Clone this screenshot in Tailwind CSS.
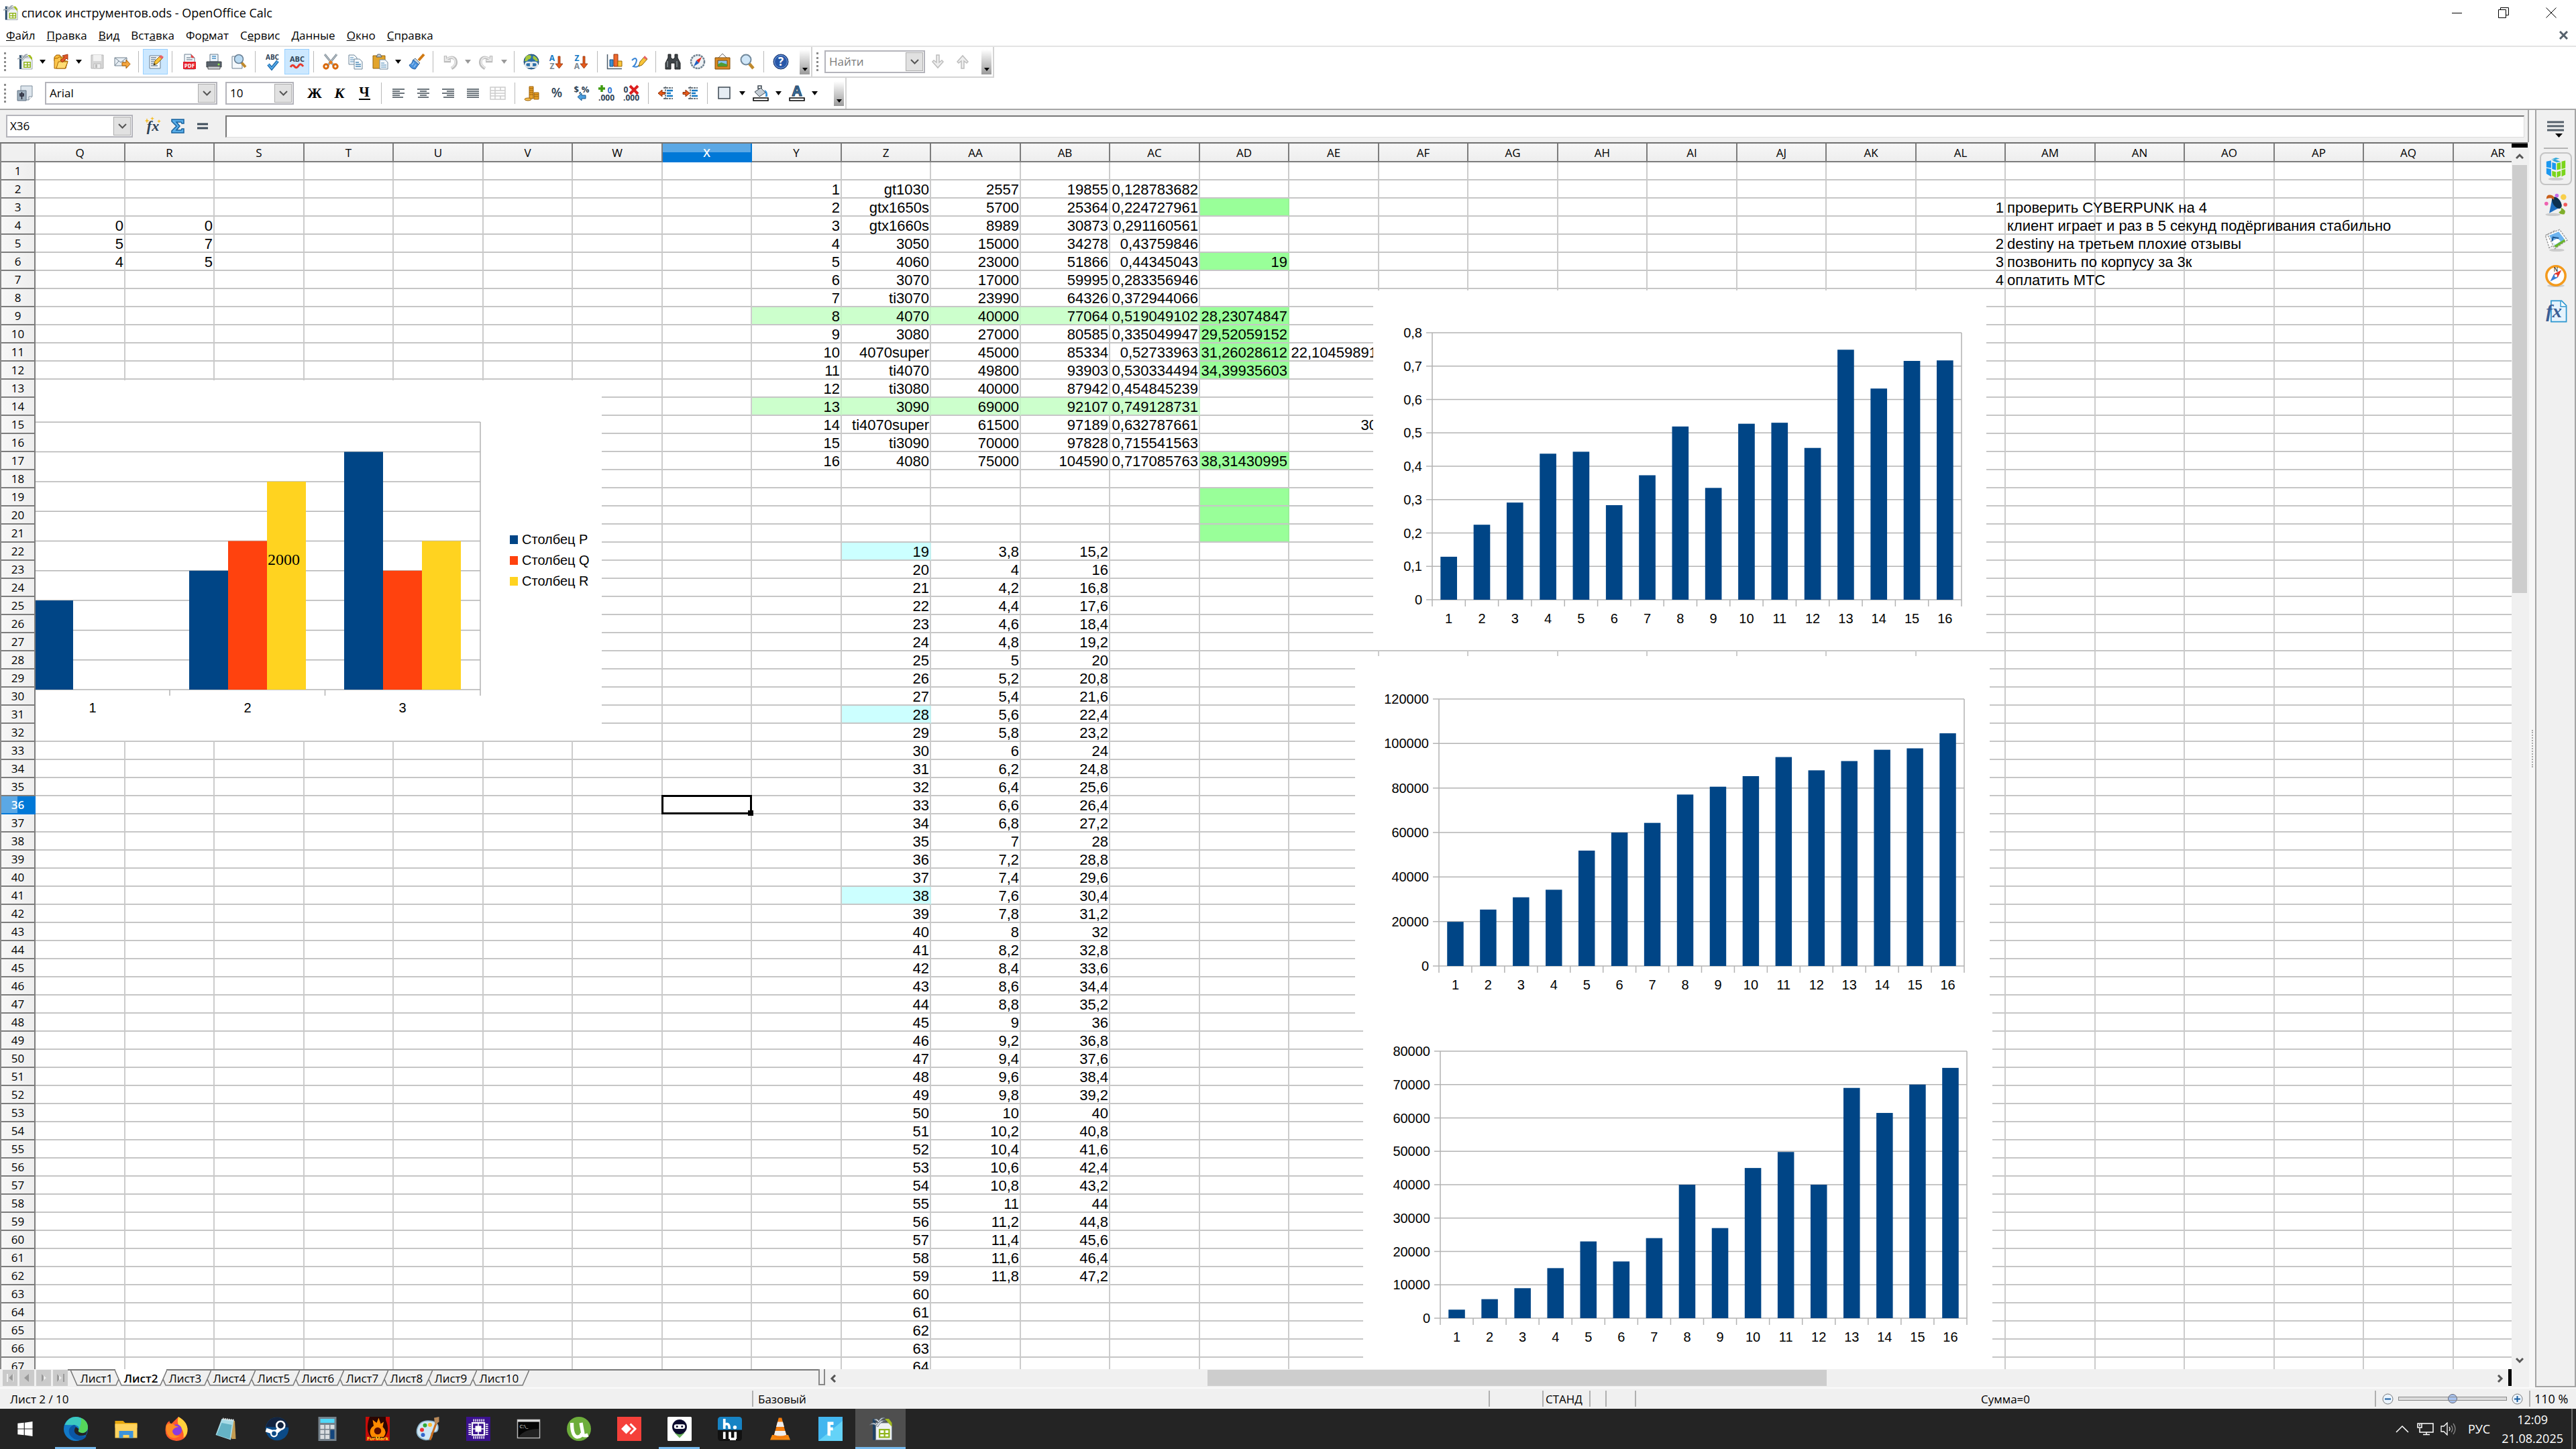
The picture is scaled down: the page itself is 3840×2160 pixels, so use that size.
<!DOCTYPE html>
<html lang="ru">
<head>
    <meta charset="UTF-8">
    <meta name="viewport" content="width=device-width, initial-scale=1.0">
    <title>список инструментов.ods - OpenOffice Calc</title>
    <script src="https://cdn.jsdelivr.net/npm/@tailwindcss/browser@4"></script>
</head>
<body class="h-screen overflow-hidden bg-white text-black flex flex-col text-[17px] leading-6 font-['Open_Sans',sans-serif]">
    <header>
        <div class="h-[37px] flex items-center justify-between">
            <div class="flex items-center gap-[5px] pl-1">
                <span data-icon="calc" class="w-[23px] h-6"></span>
                <h1 class="text-[18px]">список инструментов.ods - OpenOffice Calc</h1>
            </div>
            <div class="flex">
                <button aria-label="Свернуть" class="w-[69px] h-8 flex items-center justify-center"><svg width="16" height="16" fill="none" stroke="#000"><path d="M0 8.500h15"/></svg></button>
                <button aria-label="Развернуть" class="w-[69px] h-8 flex items-center justify-center"><svg width="16" height="16" fill="none" stroke="#000"><path d="M.5 3.500h11v12h-11zM3.500 3.500v-3h12v11h-4"/></svg></button>
                <button aria-label="Закрыть" class="w-[74px] h-8 flex items-center justify-center"><svg width="16" height="16" fill="none" stroke="#000"><path d="M.5.5l15 15M15.500.5l-15 15"/></svg></button>
            </div>
        </div>
        <nav class="h-[33px] flex items-center justify-between border-b-2 border-[#e3e3e3] pl-[9px] pr-3">
            <div class="flex gap-[17px]">
                <a href="#"><u>Ф</u>айл</a>
                <a href="#"><u>П</u>равка</a>
                <a href="#"><u>В</u>ид</a>
                <a href="#">Вст<u>а</u>вка</a>
                <a href="#">Фо<u>р</u>мат</a>
                <a href="#">С<u>е</u>рвис</a>
                <a href="#"><u>Д</u>анные</a>
                <a href="#"><u>О</u>кно</a>
                <a href="#"><u>С</u>правка</a>
            </div>
            <button aria-label="Закрыть документ"><svg width="13" height="13" stroke="#55606b" stroke-width="3"><path d="M1 1l11 11M12 1L1 12"/></svg></button>
        </nav>
        <div class="flex h-[46px]">
            <div class="flex items-center border-b-2 border-r-2 border-[#d4d4d4] pr-0.5">
                <div class="w-[18px] flex justify-start pl-[6px]"><span class="h-7 border-l-3 border-dotted border-[#8c8c8c]"></span></div>
                <div id="standardBar" class="flex items-center"></div>
                <button aria-label="Ещё" class="ml-[10px] w-[15px] h-[37px] bg-linear-to-b from-white to-[#9b9b9b] flex items-end justify-center pb-[5px]"><svg width="8" height="5"><path d="M0 0h8L4 5z"/></svg></button>
            </div>
            <div class="flex items-center border-b-2 border-r-2 border-[#d4d4d4] pr-0.5">
                <div class="w-[18px] flex justify-start pl-[6px]"><span class="h-7 border-l-3 border-dotted border-[#8c8c8c]"></span></div>
                <div class="flex w-[150px] h-[34px] border-2 border-[#b4b4bb] bg-white">
                    <input aria-label="Найти" placeholder="Найти" class="w-0 flex-1 pl-[5px] placeholder:text-[#7c7c7c]">
                    <button aria-label="Список поиска" class="w-[26px] m-px border border-[#adadad] bg-[#e1e1e1] flex items-center justify-center"><svg width="13" height="8" fill="none" stroke="#555" stroke-width="2"><path d="M1 1l5.500 5.500L12 1"/></svg></button>
                </div>
                <button aria-label="Найти далее" class="w-[37px] flex justify-center"><svg width="20" height="22" fill="#eee" stroke="#bdbdbd" stroke-width="1.500"><path d="M8 1h4v11l4-3 2 2-8 9-8-9 2-2 4 3z"/></svg></button>
                <button aria-label="Найти ранее" class="w-[37px] flex justify-center"><svg width="20" height="22" fill="#eee" stroke="#bdbdbd" stroke-width="1.500"><path d="M8 21h4V10l4 3 2-2-8-9-8 9 2 2 4-3z"/></svg></button>
                <button aria-label="Ещё" class="ml-[10px] w-[15px] h-[37px] bg-linear-to-b from-white to-[#9b9b9b] flex items-end justify-center pb-[5px]"><svg width="8" height="5"><path d="M0 0h8L4 5z"/></svg></button>
            </div>
        </div>
        <div class="flex h-[46px]">
            <div class="flex items-center border-r-2 border-[#d4d4d4] pr-0.5">
                <div class="w-[18px] flex justify-start pl-[6px]"><span class="h-7 border-l-3 border-dotted border-[#8c8c8c]"></span></div>
                <button aria-label="Стили" class="w-[37px] flex justify-center"><span data-icon="styles" class="w-6 h-6"></span></button>
                <div class="relative ml-3 w-[257px] h-[34px] border-2 border-[#b4b4bb] flex">
                    <select aria-label="Шрифт" class="appearance-none w-full pl-[5px]"><option>Arial</option></select>
                    <span class="pointer-events-none absolute right-px inset-y-px w-[26px] border border-[#adadad] bg-[#e1e1e1] flex items-center justify-center"><svg width="13" height="8" fill="none" stroke="#555" stroke-width="2"><path d="M1 1l5.500 5.500L12 1"/></svg></span>
                </div>
                <div class="relative mx-3 w-[102px] h-[34px] border-2 border-[#b4b4bb] flex">
                    <select aria-label="Размер" class="appearance-none w-full pl-[5px]"><option>10</option></select>
                    <span class="pointer-events-none absolute right-px inset-y-px w-[26px] border border-[#adadad] bg-[#e1e1e1] flex items-center justify-center"><svg width="13" height="8" fill="none" stroke="#555" stroke-width="2"><path d="M1 1l5.500 5.500L12 1"/></svg></span>
                </div>
                <div id="formatBar" class="flex items-center"></div>
                <button aria-label="Ещё" class="ml-5 w-[15px] h-[37px] bg-linear-to-b from-white to-[#9b9b9b] flex items-end justify-center pb-[5px]"><svg width="8" height="5"><path d="M0 0h8L4 5z"/></svg></button>
            </div>
        </div>
    </header>

    <main class="flex-1 min-h-0 flex bg-[#f0f0f0]">
        <div class="flex-1 min-w-0 flex flex-col border-t-2 border-[#a5a5a5]">
            <div class="h-12 flex items-center pl-[9px] pr-[5px] border-r-2 border-[#a5a5a5]">
                <div class="flex w-[189px] h-[34px] border-2 border-[#b4b4bb] bg-white">
                    <input aria-label="Имя ячейки" value="X36" class="w-0 flex-1 pl-1">
                    <button aria-label="Список имён" class="w-[26px] m-px border border-[#adadad] bg-[#e1e1e1] flex items-center justify-center"><svg width="13" height="8" fill="none" stroke="#555" stroke-width="2"><path d="M1 1l5.500 5.500L12 1"/></svg></button>
                </div>
                <div id="formulaBar" class="flex items-center ml-[11px] mr-4"></div>
                <input aria-label="Строка ввода" class="flex-1 h-[33px] bg-white border-t-2 border-l-2 border-r border-b border-t-[#777] border-l-[#777] border-r-[#ddd] border-b-[#ddd]">
            </div>
            <div class="flex-1 min-h-0 flex border-t-2 border-[#707070] mr-[2px]">
                <div class="relative flex-1 min-w-0 overflow-hidden bg-white border-l-2 border-[#8a8a8a]">
                    <table class="table-fixed w-[3789px] border-separate border-spacing-0 font-['Liberation_Sans',Arial,sans-serif] text-[22px] leading-[23px]">
                        <thead id="sheetHead" class="font-['Open_Sans',sans-serif] text-[17px]"></thead>
                        <tbody id="sheetBody"></tbody>
                    </table>
                    <div id="charts" class="font-['Liberation_Sans',Arial,sans-serif] text-[20px]"></div>
                </div>
                <div class="w-6 flex flex-col items-center">
                    <div class="h-[6px] w-full bg-black"></div>
                    <button aria-label="Вверх" class="h-[26px]"><svg width="12" height="10" fill="none" stroke="#555" stroke-width="3"><path d="M1 8l5-5 5 5"/></svg></button>
                    <div class="w-[22px] h-[638px] bg-[#cdcdcd]"></div>
                    <div class="flex-1"></div>
                    <button aria-label="Вниз" class="h-[26px]"><svg width="12" height="10" fill="none" stroke="#555" stroke-width="3"><path d="M1 2l5 5 5-5"/></svg></button>
                </div>
            </div>
            <div class="h-[27px] flex mr-[2px]">
                <div class="w-[1220px] flex">
                    <div class="flex gap-[3px] pl-1 pt-px">
                        <button aria-label="Первый лист" class="w-[22px] h-6 bg-[#cacaca] flex items-center justify-center"><svg width="12" height="14"><path d="M1 1h2v12H1zM11 1v12L4 7z" fill="#eee"/><path d="M10 1v11L4 7z" fill="#999"/></svg></button>
                        <button aria-label="Предыдущий лист" class="w-[22px] h-6 bg-[#cacaca] flex items-center justify-center"><svg width="12" height="14"><path d="M9 1v12L2 7z" fill="#999"/></svg></button>
                        <button aria-label="Следующий лист" class="w-[22px] h-6 bg-[#cacaca] flex items-center justify-center"><svg width="12" height="14"><path d="M3 1v12l7-6z" fill="#eee"/><path d="M3 1v12l3-3V4z" fill="#999"/></svg></button>
                        <button aria-label="Последний лист" class="w-[22px] h-6 bg-[#cacaca] flex items-center justify-center"><svg width="12" height="14"><path d="M1 1v12l7-6z" fill="#eee"/><path d="M1 1v12l3-3V4zM10 1h2v12h-2z" fill="#999"/></svg></button>
                    </div>
                    <div id="sheetTabs" class="flex flex-1 border-t-2 border-[#777] pl-[10px] mb-[2px]"></div>
                </div>
                <div class="w-[10px] mb-[3px] border-2 border-t-0 border-[#888] bg-[#f0f0f0]"></div>
                <button aria-label="Влево" class="w-6 flex items-center justify-center"><svg width="10" height="12" fill="none" stroke="#555" stroke-width="3"><path d="M8 1L3 6l5 5"/></svg></button>
                <div class="flex-1 flex pt-px pb-[2px]">
                    <div class="flex-[546]"></div>
                    <div class="flex-[922] bg-[#cdcdcd]"></div>
                    <div class="flex-[992]"></div>
                </div>
                <button aria-label="Вправо" class="w-6 flex items-center justify-center"><svg width="10" height="12" fill="none" stroke="#555" stroke-width="3"><path d="M2 1l5 5-5 5"/></svg></button>
                <div class="w-[5px] bg-black mb-[2px]"></div>
                <div class="w-6"></div>
            </div>
        </div>
        <div class="w-[11px] border-t-2 border-r-2 border-[#a5a5a5] bg-[#f7f7f7] flex items-center justify-center"><span class="h-14 border-l-2 border-dotted border-[#aaa]"></span></div>
        <aside class="w-[59px] border-t-2 border-r-2 border-b-2 border-[#a5a5a5] flex flex-col items-center">
            <button aria-label="Параметры боковой панели" class="mt-4"><svg width="26" height="28" stroke="#55606b" stroke-width="3"><path d="M0 2h25M0 8h25M0 14h25"/><path d="M12 19h11l-5.500 6z" fill="#000" stroke="none"/></svg></button>
            <div class="mt-3 w-9 h-0.5 bg-[#b5b5b5]"></div>
            <div id="sideBar" class="mt-[5px] flex flex-col gap-1"></div>
        </aside>
    </main>

    <footer>
        <div class="h-8 flex items-center bg-[#f0f0f0] border-t-2 border-[#fafafa] leading-none">
            <div class="w-[1121px] pl-[15px]">Лист 2 / 10</div>
            <div class="w-[1098px] h-6 border-l-2 border-[#b0b0b0] pl-[7px] flex items-center">Базовый</div>
            <div class="w-20 h-6 border-l-2 border-[#b0b0b0]"></div>
            <div class="w-[70px] h-6 border-l-2 border-[#b0b0b0] pl-[3px] flex items-center">СТАНД</div>
            <div class="w-6 h-6 border-l-2 border-[#b0b0b0]"></div>
            <div class="w-11 h-6 border-l-2 border-[#b0b0b0]"></div>
            <div class="flex-1 h-6 border-l-2 border-[#b0b0b0] flex items-center justify-center">Сумма=0</div>
            <div class="w-[230px] h-6 border-l-2 border-[#b0b0b0] flex items-center justify-center gap-2">
                <button aria-label="Уменьшить"><svg width="17" height="17" fill="#eaf4ff" stroke="#777"><circle cx="8.500" cy="8.500" r="7.500"/><path d="M4 8.500h9" stroke="#15599c" stroke-width="2"/></svg></button>
                <input type="range" aria-label="Масштаб" min="0" max="100" value="50" class="appearance-none w-40 h-1 bg-[#dcdcdc] outline outline-[#8a8a8a] [&::-webkit-slider-thumb]:appearance-none [&::-webkit-slider-thumb]:size-[14px] [&::-webkit-slider-thumb]:rounded-full [&::-webkit-slider-thumb]:bg-[#a7c2ee] [&::-webkit-slider-thumb]:border [&::-webkit-slider-thumb]:border-[#667]">
                <button aria-label="Увеличить"><svg width="17" height="17" fill="#eaf4ff" stroke="#777"><circle cx="8.500" cy="8.500" r="7.500"/><path d="M4 8.500h9M8.500 4v9" stroke="#15599c" stroke-width="2"/></svg></button>
            </div>
            <div class="w-[70px] h-6 border-l-2 border-[#b0b0b0] pl-[6px] flex items-center text-[18px]">110 %</div>
        </div>
        <div class="h-[60px] bg-[#242424] text-white flex items-stretch justify-between">
            <div id="taskBar" class="flex"></div>
            <div class="flex items-center border-r-2 border-[#6d6d6d] mr-[5px] pr-3 text-[18px]">
                <svg class="mr-3" width="20" height="12" fill="none" stroke="#fff" stroke-width="1.500"><path d="M1 11l9-9 9 9"/></svg>
                <svg class="mr-[10px]" width="25" height="20" fill="none" stroke="#fff" stroke-width="1.500"><path d="M7 2h17v13H4V9M1 2h6v6H1zM4 3v3M14 15v4M9 18.500h10"/></svg>
                <svg class="mr-[17px]" width="24" height="20" fill="none" stroke="#fff" stroke-width="1.300"><path d="M1 6h4l5-5v18l-5-5H1zM13 7q2 3 0 6"/><path d="M16 5q4 5 0 10M19 2q6 8 0 16" stroke="#888"/></svg>
                <span class="mr-[17px]">РУС</span>
                <div class="text-center leading-[28px]"><div>12:09</div><div>21.08.2025</div></div>
            </div>
        </div>
    </footer>

    <script>
        const page = '<path d="M5 1h10l5 5v17H5z" fill="#f4f8fb" stroke="#6b7f90"/><path d="M15 1v5h5" fill="#cfdbe5" stroke="#6b7f90"/>';
        const icons = {
            calc: '<path d="M4 2h3v21H4z" fill="#1d4164"/><path d="M7 6h13l3 3v14H7z" fill="#eef1f3" stroke="#7b8791" stroke-width=".7"/><path d="M16 2h4l3 4v4z" fill="#a3bd1e"/><path d="M10 12h11v9H10z" fill="#8fb41c"/><path d="M11.500 13.500h3.500v2.500h-3.500zM16.500 13.500h3v2.500h-3zM11.500 17.500h3.500v2h-3.500zM16.500 17.500h3v2h-3z" fill="#fff"/><path d="M1 8q4-4 7 0 3-6 9-4-5 0-8 6-4-4-8-2zM5 3q3-2 5 1 2-4 6-3-4 1-6 5-2-3-5-3z" fill="#d8dde1" stroke="#647381" stroke-width=".6"/>',
            open: '<path d="M2 5l3-3h5l2 3h6v6H2z" fill="#f6b93b" stroke="#9c5b00"/><path d="M2 22V7h5l2-2h3v6h10l-3 11z" fill="#fcc64c" stroke="#a86500"/><path d="M5 22l3-10h14l-4 10z" fill="#ffdc74" stroke="#a86500"/><path d="M11 10l6-5-3-2 8-2v8l-2-2-6 6z" fill="#e2582a" stroke="#8e2500" stroke-width=".8"/>',
            save: '<path d="M3 2h18v20H3z" fill="#d6d6d6" stroke="#b5b5b5"/><path d="M6 2h12v9H6z" fill="#f2f2f2"/><path d="M7 15h10v7H7z" fill="#eee" stroke="#bbb"/><path d="M9 16h3v5H9z" fill="#bbb"/>',
            mail: '<path d="M1 6h18v12H1z" fill="#e8eff5" stroke="#71818f"/><path d="M1 6l9 7 9-7M1 18l6-7M19 18l-6-7" fill="none" stroke="#71818f"/><path d="M12 13h6V9l6 6.500-6 6.500v-4h-6z" fill="#f5a640" stroke="#a65c00"/>',
            edit: '<path d="M3 3h16v19H3z" fill="#f7fafc" stroke="#6b7f90"/><path d="M5 6h8M5 9h7M5 12h5M5 15h4M5 18h10" stroke="#72869a" stroke-width="1.500"/><path d="M9 17l2-6 8-8 4 3-9 9z" fill="#f8c43a" stroke="#8d6505"/><path d="M17 5l3-3 4 3-3 3z" fill="#e9646b"/><path d="M9 17l1-3 2 2z" fill="#222"/>',
            pdf: page + '<path d="M8 6h6M8 9h9" stroke="#8797a5" stroke-width="1.500"/><path d="M15 1v5h5z" fill="#e44"/><path d="M3 12h19v11H3z" fill="#e5202a"/><text x="12.500" y="20.500" font-size="8" font-weight="bold" fill="#fff" text-anchor="middle">PDF</text>',
            print: '<path d="M6 1h12v11H6z" fill="#eef5fb" stroke="#667a8b"/><path d="M9 4h6M9 7h6" stroke="#4b91c5" stroke-width="1.500"/><path d="M1 12h22v8H1z" fill="#59636c" stroke="#343b41"/><path d="M3 19h18v4H3z" fill="#c9ced2" stroke="#555"/><circle cx="19" cy="16" r="1.500" fill="#8eea42"/>',
            preview: '<path d="M2 4h15v18H2z" fill="#f4f8fb" stroke="#6b7f90"/><path d="M15 12l7 8" stroke="#c08a2d" stroke-width="4"/><circle cx="12" cy="8" r="6.500" fill="#b9daf2" stroke="#667d92" stroke-width="1.500"/>',
            spell: '<text x="12" y="9" font-size="10" font-weight="bold" fill="#2d4154" text-anchor="middle">ABC</text><path d="M6 16l5 6 9-11" fill="none" stroke="#1766a8" stroke-width="4.500"/><path d="M6 16l5 6 9-11" fill="none" stroke="#56a9e8" stroke-width="2"/>',
            autospell: '<text x="12" y="12" font-size="11" font-weight="bold" fill="#2d4154" text-anchor="middle">ABC</text><path d="M2 20q3-5 6-1t6-1 7 1" fill="none" stroke="#e8382c" stroke-width="3"/>',
            cut: '<path d="M3 1l13 16M21 1L8 17" stroke="#7e8b95" stroke-width="3"/><path d="M3 1l13 16M21 1L8 17" stroke="#d5dde3" stroke-width="1"/><circle cx="5" cy="19" r="3.200" fill="none" stroke="#d9690c" stroke-width="3"/><circle cx="19" cy="19" r="3.200" fill="none" stroke="#d9690c" stroke-width="3"/><circle cx="12" cy="13" r="2.500" fill="#e87d1a"/>',
            copy: '<path d="M2 2h8l4 4v10H2z" fill="#f4f8fb" stroke="#70889c"/><path d="M4 6h5M4 9h7M4 12h7" stroke="#4e8ab8"/><path d="M10 8h8l4 4v11H10z" fill="#f4f8fb" stroke="#70889c"/><path d="M12 13h5M12 16h8M12 19h8" stroke="#4e8ab8" stroke-width="1.500"/>',
            paste: '<path d="M1 3h18v19H1z" fill="#e2a42b" stroke="#95630a"/><path d="M6 5l2-4h4l2 4z" fill="#bfc9d1" stroke="#56626c"/><path d="M11 9h8l4 4v10H11z" fill="#f4f8fb" stroke="#70889c"/><path d="M13 14h5M13 17h8M13 20h8" stroke="#4e8ab8"/>',
            brush: '<path d="M23 1l-8 9" stroke="#d17a14" stroke-width="4"/><path d="M10 7l7 7-3 3-8-7z" fill="#c8d8e6" stroke="#55728c"/><path d="M7 9l8 7-5 7q-6 0-9-6 4-1 6-8z" fill="#4a92de" stroke="#1f5a9c"/><path d="M5 17l3-4M8 20l3-4" stroke="#b9dcfa"/>',
            undo: '<path d="M5 3v8h8M6 10q9-8 14-1 3 8-6 13" fill="none" stroke="#bdbdbd" stroke-width="4.500"/><path d="M5 4v6h7M6 9q9-7 13 0 3 7-5 12" fill="none" stroke="#e8e8e8" stroke-width="2"/>',
            redo: '<path d="M19 3v8h-8M18 10Q9 2 4 9q-3 8 6 13" fill="none" stroke="#bdbdbd" stroke-width="4.500"/><path d="M19 4v6h-7M18 9Q9 2 5 9q-3 7 5 12" fill="none" stroke="#e8e8e8" stroke-width="2"/>',
            link: '<circle cx="12" cy="12" r="11" fill="#2c6fa8" stroke="#1b4468"/><path d="M4 4q6-4 8 0-1 5-4 4-2 4-6 3zM15 3q6 2 7 8-4 1-5-2-4-1-2-6z" fill="#a6c83c"/><rect x="3" y="13" width="10" height="7" rx="3.500" fill="none" stroke="#e4e9ec" stroke-width="2.500"/><rect x="11" y="13" width="10" height="7" rx="3.500" fill="none" stroke="#e4e9ec" stroke-width="2.500"/>',
            sortAZ: '<text x="6" y="11" font-size="12" font-weight="bold" fill="#1479c4" text-anchor="middle">A</text><text x="6" y="23" font-size="12" font-weight="bold" fill="#7c8892" text-anchor="middle">Z</text><path d="M15 4h3v11h4l-5.500 7-5.500-7h4z" fill="#e65a1c" stroke="#8a2b00" stroke-width=".8"/>',
            sortZA: '<text x="6" y="11" font-size="12" font-weight="bold" fill="#1479c4" text-anchor="middle">Z</text><text x="6" y="23" font-size="12" font-weight="bold" fill="#7c8892" text-anchor="middle">A</text><path d="M15 4h3v11h4l-5.500 7-5.500-7h4z" fill="#e65a1c" stroke="#8a2b00" stroke-width=".8"/>',
            chart: '<path d="M1.500 1v21.500H23" fill="none" stroke="#4b5c6b" stroke-width="1.500"/><path d="M5 9h5v10H5z" fill="#3d8fd1" stroke="#0d4f8a"/><path d="M11 1h6v18h-6z" fill="#ef6a2d" stroke="#97310a"/><path d="M17 11h6v8h-6z" fill="#fbc53d" stroke="#996700"/>',
            draw: '<path d="M1 10q6-6 7 0-1 6-5 9 6 2 9-2" fill="none" stroke="#3a86d6" stroke-width="2"/><path d="M11 19l2-7 7-8 4 4-8 9z" fill="#f8c43a" stroke="#8d6505"/><path d="M18 6l2-3 4 4-2 2z" fill="#e9646b"/>',
            find: '<path d="M5 1h4v5l2 2h2l2-2V1h4v5l4 8v9h-8v-9h-6v9H1v-9l4-8z" fill="#3f4448" stroke="#1a1c1e"/><path d="M4 11v9M18 11v9" stroke="#8b9297" stroke-width="1.500"/>',
            compass: '<circle cx="12" cy="12" r="10" fill="#eef2f5" stroke="#6d7f8e" stroke-width="2.500" stroke-dasharray="3 1"/><path d="M18 5l-4 9-4-4z" fill="#e02a20"/><path d="M6 19l4-9 4 4z" fill="#1f5fc0"/>',
            gallery: '<path d="M12 0l6 6M12 0L6 6" stroke="#666"/><path d="M1 6h22v17H1z" fill="#d98a25" stroke="#7d4700"/><path d="M5 10h14v9H5z" fill="#83c2ef" stroke="#7d4700"/><path d="M5 19v-3l5-3 9 3v3z" fill="#4f9b32"/>',
            zoom: '<path d="M15 15l6 7" stroke="#c08a2d" stroke-width="4.500"/><circle cx="10" cy="9" r="7.500" fill="#cfe6f8" stroke="#71889b" stroke-width="2"/>',
            help: '<circle cx="12" cy="12" r="11" fill="#2757a8" stroke="#16346b"/><circle cx="12" cy="12" r="9.500" fill="none" stroke="#7ea2dc"/><text x="12" y="18" font-size="17" font-weight="bold" fill="#fff" text-anchor="middle">?</text>',
            styles: '<path d="M6 1h17v16l-5 5H6z" fill="#dde5ec" stroke="#7e8f9e"/><path d="M18 22v-5h5" fill="#fff" stroke="#7e8f9e"/><path d="M1 8h13v15H1z" fill="#9fb0be" stroke="#5c6f80"/><path d="M7.500 10v11M4 13h7M5 13v3h5v-3" fill="none" stroke="#223" stroke-width="1.500"/>',
            bold: '<text x="12" y="19" font-size="22" font-weight="bold" font-family="Liberation Serif, serif" text-anchor="middle">Ж</text>',
            italic: '<text x="12" y="19" font-size="22" font-weight="bold" font-style="italic" font-family="Liberation Serif, serif" text-anchor="middle">К</text>',
            underline: '<text x="12" y="17" font-size="21" font-weight="bold" font-family="Liberation Serif, serif" text-anchor="middle">Ч</text><path d="M4 21h17" stroke="#000" stroke-width="2"/>',
            left: '<path d="M3 6h18M3 9h11M3 12h18M3 15h11M3 18h16" stroke="#3d4852" stroke-width="1.600"/>',
            center: '<path d="M3 6h18M7 9h10M3 12h18M7 15h10M4 18h16" stroke="#3d4852" stroke-width="1.600"/>',
            right: '<path d="M3 6h18M10 9h11M3 12h18M10 15h11M5 18h16" stroke="#3d4852" stroke-width="1.600"/>',
            justify: '<path d="M3 6h18M3 9h18M3 12h18M3 15h18M3 18h18" stroke="#3d4852" stroke-width="1.600"/>',
            merge: '<path d="M1 3h22v18H1zM1 8h22M1 12h22M1 16h22M8 3v5M16 3v5M8 16v5M16 16v5M8 8v8" fill="none" stroke="#ccc" stroke-width="1.500"/>',
            currency: '<path d="M8 2h6v18H8zM15 11h7v10h-7z" fill="#e7a02a" stroke="#9d6107"/><path d="M8 5h6M8 8h6M8 11h6M8 14h6M15 14h7M15 17h7" stroke="#9d6107"/><ellipse cx="6" cy="21" rx="5" ry="2" fill="#f6c050" stroke="#9d6107"/>',
            percent: '<text x="12" y="18" font-size="19" font-weight="600" fill="#2d4154" text-anchor="middle">%</text>',
            standard: '<text x="12" y="11" font-size="13" font-weight="bold" fill="#2d4154" text-anchor="middle">$,%</text><path d="M18 15h-6v-3l-6 5.500 6 5.500v-3h6z" fill="#4b9fe0" stroke="#17568c"/>',
            addDecimal: '<path d="M5 0v10M0 5h10" stroke="#3f9a10" stroke-width="3.500"/><text x="17" y="12" font-size="12" font-weight="bold" fill="#2a6fd0" text-anchor="middle">0</text><text x="12" y="23" font-size="12" font-weight="bold" fill="#2d4154" text-anchor="middle">.000</text>',
            delDecimal: '<text x="4" y="11" font-size="12" font-weight="bold" fill="#2d4154" text-anchor="middle">0</text><text x="12" y="23" font-size="12" font-weight="bold" fill="#2d4154" text-anchor="middle">.000</text><path d="M10 1l12 12M22 1L10 13" stroke="#dc1f1f" stroke-width="4"/>',
            outdent: '<path d="M9 4h14M9 20h14M12 2v20" stroke="#3d4852" stroke-width="1.300" stroke-dasharray="3 1"/><path d="M14 8h9M14 12h6M14 16h9" stroke="#1479c4" stroke-width="2.500"/><path d="M11 10.500H7V7l-6 5 6 5v-3.500h4z" fill="#e65a1c" stroke="#8a2b00"/>',
            indent: '<path d="M9 4h14M9 20h14M12 2v20" stroke="#3d4852" stroke-width="1.300" stroke-dasharray="3 1"/><path d="M14 8h9M14 12h6M14 16h9" stroke="#1479c4" stroke-width="2.500"/><path d="M1 10.500h4V7l6 5-6 5v-3.500H1z" fill="#e65a1c" stroke="#8a2b00"/>',
            border: '<path d="M3 3h17v17H3z" fill="#e6edf4" stroke="#3d4852" stroke-width="1.500"/>',
            fill: '<path d="M8 1h5v4H8z" fill="none" stroke="#3d4852" stroke-width="1.500"/><path d="M3 10l9-6 7 7-9 6z" fill="#c4cdd5" stroke="#3d4852"/><path d="M17 7q6 1 5 10h-3q1-6-2-10z" fill="#3291dc"/><path d="M1 19h22v4H1z" fill="#fff" stroke="#000" stroke-width="1.500"/>',
            color: '<text x="12" y="16" font-size="21" font-weight="bold" fill="#3b6f9f" stroke="#24435f" text-anchor="middle">A</text><path d="M1 19h22v4H1z" fill="#fff" stroke="#000" stroke-width="1.500"/>',
            fx: '<text x="12" y="19" font-size="22" font-style="italic" font-weight="bold" font-family="Liberation Serif, serif" fill="#2d4154" text-anchor="middle">fx</text><path d="M3 0l1 3 3 1-3 1-1 3-1-3-2-1 2-1zM11-2l1 2 2 .5-2 1-1 2-1-2-2-1 2-.5zM21 2l1 2 2 .5-2 1-1 2-1-2-2-1 2-.5z" fill="#f6bf2a"/>',
            sum: '<path d="M3 2h18v6h-3l-1-2h-7l5 6-5 6h7l1-2h3v6H3v-3l7-7-7-7z" fill="#58ade8" stroke="#17609c" stroke-width="1.500"/>',
            equals: '<path d="M4 9h16M4 15h16" stroke="#3d4c5a" stroke-width="3"/>',
            props: '<ellipse cx="12" cy="22.500" rx="8" ry="1.500" fill="#ccc"/><path d="M2 4l5-1v8l-5-1zM2 11l5 1v8l-5-3z" fill="#1b98f0"/><path d="M8 3l3-1 6 2-4 1zM7 2l5-2 4 1-4 1z" fill="#2da6d8"/><path d="M8 5l4 1v7l-4-1z" fill="#1b98f0"/><path d="M13 6l4-1v7l-4 1zM18 4l4-1v8l-4 1zM18 13l4-1v6l-4 2zM8 14l4 1v6l-4-2zM13 15l4-1v5l-4 2z" fill="#7bd51b"/>',
            stylist: '<ellipse cx="9" cy="22.500" rx="8" ry="1.500" fill="#ccc"/><path d="M8 6l10 8-13 7z" fill="#1e6fc0"/><ellipse cx="13" cy="10" rx="4" ry="7" transform="rotate(-35 13 10)" fill="#0c3150"/><path d="M2 6q0-5 5-4 4 1 3 5-2-3-8-1z" fill="#c9601c"/><path d="M15 20q4-2 2-5 7 3 4 7-4 1-6-2z" fill="#7fae2c"/><circle cx="13" cy="2.500" r="2" fill="#c66be8"/><circle cx="20" cy="4" r="3" fill="#f8cf4b"/><circle cx="22" cy="12" r="2" fill="#f25a5a"/><circle cx="2" cy="11" r="2" fill="#ee62b0"/>',
            images: '<ellipse cx="13" cy="22.500" rx="8" ry="1.500" fill="#ccc"/><path d="M1 7l10-5 10 9-16 9z" fill="#fff" stroke="#999" stroke-dasharray="2 1"/><path d="M3 6l13-5 8 11-13 9z" fill="#fff" stroke="#999" stroke-dasharray="2 1"/><path d="M5 7l10-4 6 8-10 7z" fill="#6db4ef"/><path d="M8 13l6-3 3 3-6 4z" fill="#fff"/><path d="M10 18l11-7 1 2-10 7z" fill="#6ab42c"/><path d="M8 13l1-4 6 1" fill="none" stroke="#1d5793" stroke-width="1.500"/>',
            navigator: '<ellipse cx="12" cy="22.500" rx="9" ry="1.500" fill="#ccc"/><circle cx="12" cy="12" r="10" fill="#fdfdfd" stroke="#f39a1c" stroke-width="2.500"/><text x="12" y="8" font-size="6" text-anchor="middle">N</text><path d="M18 6l-4 8-4-4z" fill="#e2382c"/><path d="M6 18l4-8 4 4z" fill="#3a7fd5"/><circle cx="12" cy="12" r="1.500" fill="#fff"/>',
            functions: '<path d="M7 1h11l5 5v17H7z" fill="#e6f3fc" stroke="#2b95cf" stroke-width="1.200"/><path d="M17 1v6h6" fill="#fff" stroke="#2b95cf"/><text x="10" y="18" font-size="20" font-style="italic" font-family="Liberation Serif, serif" font-weight="bold" fill="#3b5e94" text-anchor="middle">fx</text>',
            windows: '<path d="M2 5l8-1v7.500H2zM11 4l10-1.500v9H11zM2 12.500h8V20l-8-1zM11 12.500h10v9L11 20z" fill="#fff"/>',
            edge: '<circle cx="12" cy="12" r="12" fill="#1279c8"/><path d="M1 8Q5-1 14 0.200q10 2 10 11-1 6-8 5-2-1-1-3 1-5-5-5Q4 8 1 8z" fill="#3cc9c0"/><path d="M17 1q7 3 7 10-1 6-8 5-2-1-1-3 3-7 2-12z" fill="#55d65a"/><path d="M10 8q-7 3-4 10 4 6 12 5 4-2 4.500-4-5 1-8-1-5-3-2.500-8Q12 8 10 8z" fill="#0b56a5"/><path d="M12 10q-3 4 0 7 4 3 10 1l2-5q-4 5-9 2-1-1 0-3z" fill="#242424"/>',
            folder: '<path d="M1 4h8l2 2h12v5H1z" fill="#e5a50c"/><path d="M1 7h22v14H1z" fill="#ffd35e"/><path d="M5 21v-7h14v7h-4v-3H9v3z" fill="#3c93dc"/>',
            firefox: '<path d="M14 0q9 5 9 13 0 10-11 11Q1 23 1 13q0-6 4-9 0 2 2 3 4-4 7-7z" fill="#ff5a2c"/><path d="M14 0q9 5 9 13 0 5-4 8 1-8-4-11-3-4-1-10z" fill="#ffd23c"/><circle cx="12" cy="13" r="5.500" fill="#8a3be0"/><path d="M2 8q5-3 9 1 2 0 3 1-6 1-6 5 2 5 8 4-9 5-13-2-2-4-1-9z" fill="#ff8d22"/>',
            notepad: '<path d="M8 2l12 2 1 18-4 0z" fill="#c49c52"/><path d="M7 2l12 1-3 20L1 18z" fill="#a9dbe6"/><path d="M7 6l10 2-2 14-13-4z" fill="#65b3c5"/><path d="M8 2l11 1.500" stroke="#eee" stroke-width="2" stroke-dasharray="1 1"/>',
            steam: '<circle cx="12" cy="12" r="11.500" fill="#0b4a86"/><path d="M1 10Q3 1 12 .5q10 1 11.500 10z" fill="#12233f"/><path d="M1 13l9 3 6-5" fill="none" stroke="#fff" stroke-width="4"/><circle cx="15.500" cy="8.500" r="4" fill="#12233f" stroke="#fff" stroke-width="1.800"/><circle cx="9" cy="16.500" r="3" fill="#0b4a86" stroke="#fff" stroke-width="1.500"/>',
            calculator: '<path d="M3 0h18v24H3z" fill="#74818b"/><path d="M5 2h14v4H5z" fill="#4fd8f8"/><path d="M5 8h4v4H5zM10 8h4v4h-4zM15 8h4v4h-4zM5 13h4v4H5zM10 13h4v4h-4zM5 18h4v4H5zM10 18h4v4h-4z" fill="#d9dde0"/><path d="M15 13h4v9h-4z" fill="#13457c"/>',
            furmark: '<path d="M0 0h24v24H0z" fill="#c80b08"/><path d="M4 0h16v3q5 12-2 18H6Q-1 14 4 0z" fill="#2a0502"/><path d="M6 20Q2 13 8 9L7 3l4 3 2-5 2 6 3-2-1 5q5 5 1 10z" fill="#ff8a00"/><circle cx="12" cy="14" r="3.500" fill="#5a0d00"/><text x="12" y="23" font-size="5" font-weight="bold" fill="#ffe020" text-anchor="middle">FurMark</text>',
            paint: '<path d="M12 4q11 0 10 8-1 4-5 3-3 1-1 4 0 4-6 4Q0 21 1 13q2-9 11-9z" fill="#cfe7f5" stroke="#86aec6"/><circle cx="6" cy="13" r="2" fill="#e33"/><circle cx="9" cy="8.500" r="2" fill="#3a3"/><circle cx="14" cy="8" r="2" fill="#fb3"/><circle cx="7" cy="18" r="2" fill="#36c"/><path d="M21 4l-7 19" stroke="#c96c1c" stroke-width="2"/><path d="M18 1l5-1 0 5-4 3z" fill="#b98a5a"/>',
            cpuz: '<path d="M0 0h24v24H0z" fill="#3b128e"/><path d="M6 6h12v12H6z" fill="none" stroke="#fff" stroke-width="1.500"/><path d="M9 9h6v6H9z" fill="#fff"/><path d="M12 6v12M6 12h12" stroke="#fff"/><path d="M7 3.500h11M7 20.500h11M3.500 7v11M20.500 7v11" stroke="#fff" stroke-width="2.500" stroke-dasharray="1 1"/>',
            cmd: '<path d="M1 3h22v18H1z" fill="#050505" stroke="#b9b9b9"/><path d="M1 3h22v2H1z" fill="#ddd"/><text x="3" y="11" font-size="5" fill="#eee">C:\\_</text><path d="M2 20q6-8 20-8v8z" fill="#222"/>',
            utorrent: '<circle cx="12" cy="12" r="12" fill="#6dad3b"/><path d="M5 6q0 13 5 14 5 0 5-4 1 4 6 2M14 6l2 11" fill="none" stroke="#fff" stroke-width="3.500"/>',
            anydesk: '<path d="M0 0h24v24H0z" fill="#f5403a"/><path d="M9 7l5 5-5 5-5-5z" fill="#fff"/><path d="M13 7l5 5-5 5" fill="none" stroke="#fff" stroke-width="2"/>',
            adguard: '<rect width="24" height="24" rx="1" fill="#fff"/><path d="M7 16h10l-5 5z" fill="#67b05a"/><circle cx="12" cy="10" r="7.300" fill="#0c0b2d"/><rect x="6.500" y="7.500" width="11" height="4.500" rx="2.200" fill="#fff"/><circle cx="9.500" cy="9.700" r="1" fill="#0c0b2d"/><circle cx="14.500" cy="9.700" r="1" fill="#0c0b2d"/>',
            hwmonitor: '<rect width="24" height="24" rx="3" fill="#111"/><path d="M0 13V3q0-3 3-3h18q3 0 3 3v10z" fill="#1683c4"/><path d="M6.500 2v10M6.500 8q5-3 5 4M6.500 15v7M12 15v7M17.500 15v7M12 22h6" fill="none" stroke="#fff" stroke-width="2.500"/><circle cx="17" cy="10.500" r="1.800" fill="#fff"/>',
            vlc: '<path d="M4 18h16l2 5H2z" fill="#f38710"/><path d="M10.500 1h3l5 19q-6 3-13 0z" fill="#f57c0b"/><path d="M9.400 5h5.200l1.400 5H8zM7 14h10l1.200 4Q12 20 6 18z" fill="#eee"/>',
            fortnite: '<path d="M0 0h24v24H0z" fill="#43b6ef"/><path d="M0 24L24 4v20z" fill="#64d3f8"/><path d="M9 5h6v3h-3v2.500h2.500v3H12V19l-3-.500z" fill="#fff"/>'
        };

        const svg = (name) => `<svg class="w-full h-full overflow-visible" viewBox="0 0 24 24" fill="#000">${icons[name]}</svg>`;
        document.querySelectorAll('[data-icon]').forEach(el => { el.innerHTML = svg(el.dataset.icon); });

        // '|' is a separator, 'v' a drop-down arrow ('g' greyed out), '*' marks a pressed button
        function fillBar(id, items, sepClass) {
            document.getElementById(id).innerHTML = items.split(' ').map(item => {
                if (item === '|') return `<span class="${sepClass}"><i class="w-px h-8 bg-[#b9b9b9]"></i></span>`;
                if (item === 'v' || item === 'g') return `<button aria-label="Меню" class="w-[17px] flex justify-center"><svg width="9" height="6"><path d="M0 0h9L4.500 6z" fill="${item === 'v' ? '#000' : '#999'}"/></svg></button>`;
                const name = item.replace('*', '');
                const cls = item.includes('*')
                    ? 'w-[37px] h-[38px] flex items-center justify-center bg-[#cce8ff] border border-[#99d1ff]'
                    : 'w-[37px] h-[38px] flex items-center justify-center';
                return `<button aria-label="${name}" class="${cls}"><span class="w-6 h-6">${svg(name)}</span></button>`;
            }).join('');
        }
        fillBar('standardBar', 'calc v open v save mail | edit* | pdf print preview | spell autospell* | cut copy paste v brush | undo g redo g | link sortAZ sortZA | chart draw | find compass gallery zoom | help', 'w-[13px] flex justify-center');
        fillBar('formatBar', 'bold italic underline | left center right justify merge | currency percent standard addDecimal delDecimal | outdent indent | border v fill v color v', 'w-[14px] flex justify-center');
        fillBar('formulaBar', 'fx sum equals', '');

        document.getElementById('sideBar').innerHTML = ['props', 'stylist', 'images', 'navigator', 'functions'].map((name, i) =>
            `<button aria-label="${name}" class="${i ? 'w-12 h-[49px] flex items-center justify-center' : 'w-12 h-[49px] flex items-center justify-center border-2 border-[#c4c4c4] rounded-lg'}"><span class="w-[34px] h-[34px]">${svg(name)}</span></button>`).join('');

        const tasks = ['windows', 'edge', 'folder', 'firefox', 'notepad', 'steam', 'calculator', 'furmark', 'paint', 'cpuz', 'cmd', 'utorrent', 'anydesk', 'adguard', 'hwmonitor', 'vlc', 'fortnite', 'calc'];
        document.getElementById('taskBar').innerHTML = tasks.map(name => {
            let mark = '';
            if (name === 'edge' || name === 'adguard') mark = '<i class="absolute bottom-0 inset-x-[7px] h-[3px] bg-[#76b9ed]"></i>';
            if (name === 'calc') mark = '<i class="absolute bottom-0 inset-x-0 h-[3px] bg-[#76b9ed]"></i>';
            const size = name === 'windows' ? 'w-7 h-7' : 'w-9 h-9';
            return `<button aria-label="${name}" class="${name === 'calc' ? 'relative w-[75px] flex items-center justify-center bg-[#4f4f4f]' : 'relative w-[75px] flex items-center justify-center'}"><span class="${size}">${svg(name)}</span>${mark}</button>`;
        }).join('');

        // Sheet tabs: those right of the active one slide under their left neighbour
        const active = 2;
        let tabs = '';
        for (let n = 1; n <= 10; n++) {
            const on = n === active;
            const w = n === 10 ? 90 : 78;
            tabs += `<button class="${n === 10 ? 'relative w-[78px] h-6' : 'relative w-[66px] h-6'}" style="z-index:${on ? 20 : 15 - n}">
                <svg class="absolute -left-[6px] -top-0.5 h-[26px]" width="${w}" height="26"><path d="M0 1L10 24H${w - 10}L${w} 1" fill="${on ? '#fff' : '#f0f0f0'}" stroke="#777" stroke-width="1.500"/>${on ? `<path d="M1 0h${w - 2}v2H1z" fill="#fff"/>` : `<path d="M0 0h${w}v2H0z" fill="#777"/>`}</svg>
                <span class="${on ? 'relative font-semibold' : 'relative'}">Лист${n}</span></button>`;
        }
        document.getElementById('sheetTabs').innerHTML = tabs;

        // Sheet
        const cols = ['Q', 'R', 'S', 'T', 'U', 'V', 'W', 'X', 'Y', 'Z', 'AA', 'AB', 'AC', 'AD', 'AE', 'AF', 'AG', 'AH', 'AI', 'AJ', 'AK', 'AL', 'AM', 'AN', 'AO', 'AP', 'AQ', 'AR'];
        const cells = {
            Q4: '0', R4: '0', Q5: '5', R5: '7', Q6: '4', R6: '5',
            AD6: '19', AD9: '28,23074847', AD10: '29,52059152', AD11: '31,26028612', AD12: '34,39935603', AD17: '38,31430995',
            AE11: '22,10459891', AE15: '30',
            AL3: '1', AL5: '2', AL6: '3', AL7: '4',
            AM3: 'проверить CYBERPUNK на 4', AM4: 'клиент играет и раз в 5 секунд подёргивания стабильно',
            AM5: 'destiny на третьем плохие отзывы', AM6: 'позвонить по корпусу за 3к', AM7: 'оплатить МТС'
        };
        const cards = [
            ['gt1030', 2557, 19855, 0.128783682], ['gtx1650s', 5700, 25364, 0.224727961], ['gtx1660s', 8989, 30873, 0.291160561],
            ['3050', 15000, 34278, 0.43759846], ['4060', 23000, 51866, 0.44345043], ['3070', 17000, 59995, 0.283356946],
            ['ti3070', 23990, 64326, 0.372944066], ['4070', 40000, 77064, 0.519049102], ['3080', 27000, 80585, 0.335049947],
            ['4070super', 45000, 85334, 0.52733963], ['ti4070', 49800, 93903, 0.530334494], ['ti3080', 40000, 87942, 0.454845239],
            ['3090', 69000, 92107, 0.749128731], ['ti4070super', 61500, 97189, 0.632787661], ['ti3090', 70000, 97828, 0.715541563],
            ['4080', 75000, 104590, 0.717085763]
        ];
        const num = (v) => String(v).replace('.', ',');
        cards.forEach((c, i) => {
            cells['Y' + (i + 2)] = i + 1;
            ['Z', 'AA', 'AB', 'AC'].forEach((col, k) => { cells[col + (i + 2)] = num(c[k]); });
        });
        for (let r = 22; r <= 67; r++) {
            cells['Z' + r] = r - 3;
            if (r > 62) continue;
            cells['AA' + r] = num((r - 3) * 2 / 10);
            cells['AB' + r] = num((r - 3) * 8 / 10);
        }
        function fillOf(col, r) {
            if (col === 'AD' && [3, 6, 9, 10, 11, 12, 17, 19, 20, 21].includes(r)) return 'bg-[#99ff99] border-r-[#99f099]';
            if ((r === 9 || r === 14) && ['Y', 'Z', 'AA', 'AB', 'AC'].includes(col)) return 'bg-[#ccffcc] border-r-[#c4f4c4]';
            if (col === 'Z' && [22, 31, 41].includes(r)) return 'bg-[#ccffff] border-r-[#c4f0f0]';
            return 'border-r-[#cccccc]';
        }

        document.getElementById('sheetHead').innerHTML = '<tr><th class="w-[51px] h-7 p-0 bg-[#f0f0f0] border-r-2 border-b-2 border-[#7d7d7d]"></th>' + cols.map((c, i) =>
            `<th class="${i % 2 ? 'w-[133px]' : 'w-[134px]'} ${c === 'X' ? 'h-7 p-0 font-semibold text-white bg-linear-to-b from-[#5ba8e5] from-50% to-[#0078d7] to-50% border-r-2 border-b-2 border-[#0078d7]' : 'h-7 p-0 font-normal bg-linear-to-b from-[#f7f7f7] to-[#eeeeee] border-r-2 border-b-2 border-[#7d7d7d]'}">${c}</th>`).join('') + '</tr>';

        let rows = '';
        for (let r = 1; r <= 68; r++) {
            rows += `<tr><th class="${r === 36 ? "h-[27px] p-0 font-['Open_Sans',sans-serif] text-[17px] font-semibold text-white bg-linear-to-r from-[#5ba8e5] from-50% to-[#0078d7] to-50% border-r-2 border-b-2 border-[#0078d7]" : "h-[27px] p-0 font-['Open_Sans',sans-serif] text-[17px] font-normal bg-linear-to-r from-[#f7f7f7] to-[#eeeeee] border-r-2 border-b-2 border-[#7d7d7d]"}">${r}</th>`;
            cols.forEach(c => {
                const v = cells[c + r] ?? '';
                let inner = c === 'AM' ? `<span class="relative z-10">${v}</span>` : v;
                if (c + r === 'X36') inner = '<div class="absolute -left-[2px] -top-[2px] -right-[2px] -bottom-[2px] border-3 border-black"><i class="absolute -right-[5px] -bottom-[5px] size-2 bg-black"></i></div>';
                rows += `<td class="${c + r === 'X36' ? 'relative' : ''} h-[27px] p-0 pt-[2px] whitespace-nowrap border-r-2 border-b-2 border-b-[#c6c6c6] ${c === 'AM' ? 'pl-[2px] text-left' : 'pr-[1px] text-right'} ${fillOf(c, r)}">${inner}</td>`;
            });
            rows += '</tr>';
        }
        document.getElementById('sheetBody').innerHTML = rows;

        // Charts: coordinates are those of the window, the view box shifts them into place
        function barChart(place, [x, y, w, h], [l, t, r, b], max, step, values) {
            const catW = (r - l) / values.length;
            const yOf = (v) => b - (b - t) * v / max;
            let s = '';
            for (let k = 0; k <= Math.round(max / step); k++) {
                const gy = yOf(k * step);
                s += `<path d="M${l - 9} ${gy}H${r}"/><text x="${l - 15}" y="${gy + 7}" text-anchor="end">${num(Math.round(k * step * 10) / 10)}</text>`;
            }
            s += `<path d="M${l} ${t}V${b}M${r} ${t}V${b}"/>`;
            for (let i = 0; i <= values.length; i++) s += `<path d="M${l + i * catW} ${b}v10"/>`;
            values.forEach((v, i) => {
                s += `<rect x="${l + catW * (i + 0.25)}" y="${yOf(v)}" width="${catW / 2}" height="${b - yOf(v)}" fill="#004586" stroke="none"/>`;
                s += `<text x="${l + catW * (i + 0.5)}" y="${b + 35}" text-anchor="middle">${i + 1}</text>`;
            });
            return `<svg class="${place}" width="${w}" height="${h}" viewBox="${x} ${y} ${w} ${h}" fill="#000" stroke="#b3b3b3" stroke-width="1.500"><g class="[&_text]:stroke-none">${s}</g></svg>`;
        }

        function groupChart(place) {
            const colors = ['#004586', '#ff420e', '#ffd320'];
            const unit = 44.3, b = 1028;
            let s = '';
            for (let k = 0; k <= 9; k++) s += `<path d="M52 ${b - k * unit}H716"/>`;
            s += `<path d="M716 629V1037M484.500 1028v9M253 1028v9"/>`;
            [[3, 0, 0], [4, 5, 7], [8, 4, 5]].forEach((g, i) => {
                g.forEach((v, k) => { s += `<rect x="${51 + i * 231 + k * 58}" y="${b - v * unit}" width="58" height="${v * unit}" fill="${colors[k]}" stroke="none"/>`; });
                s += `<text x="${138 + i * 231}" y="1062" text-anchor="middle">${i + 1}</text>`;
            });
            ['P', 'Q', 'R'].forEach((n, i) => {
                s += `<rect x="760" y="${798 + i * 31}" width="12" height="13" fill="${colors[i]}" stroke="none"/><text x="778" y="${811 + i * 31}">Столбец ${n}</text>`;
            });
            s += `<text x="399" y="842" font-size="24" font-family="Liberation Serif, serif">2000</text>`;
            return `<svg class="${place}" width="844" height="537" viewBox="53 567 844 537" fill="#000" stroke="#b3b3b3" stroke-width="1.500"><g class="[&_text]:stroke-none">${s}</g></svg>`;
        }

        document.getElementById('charts').innerHTML =
            groupChart('absolute left-[51px] top-[353px] bg-white') +
            barChart('absolute left-[2045px] top-[219px] bg-white', [2047, 433, 914, 536], [2135, 496, 2924, 894], 0.8, 0.1, cards.map(c => c[3])) +
            barChart('absolute left-[2018px] top-[764px] bg-white', [2020, 978, 946, 542], [2145, 1042, 2928, 1440], 120000, 20000, cards.map(c => c[2])) +
            barChart('absolute left-[2030px] top-[1286px] bg-white', [2032, 1500, 938, 541], [2147, 1567, 2932, 1965], 80000, 10000, cards.map(c => c[1]));
    </script>
</body>
</html>
